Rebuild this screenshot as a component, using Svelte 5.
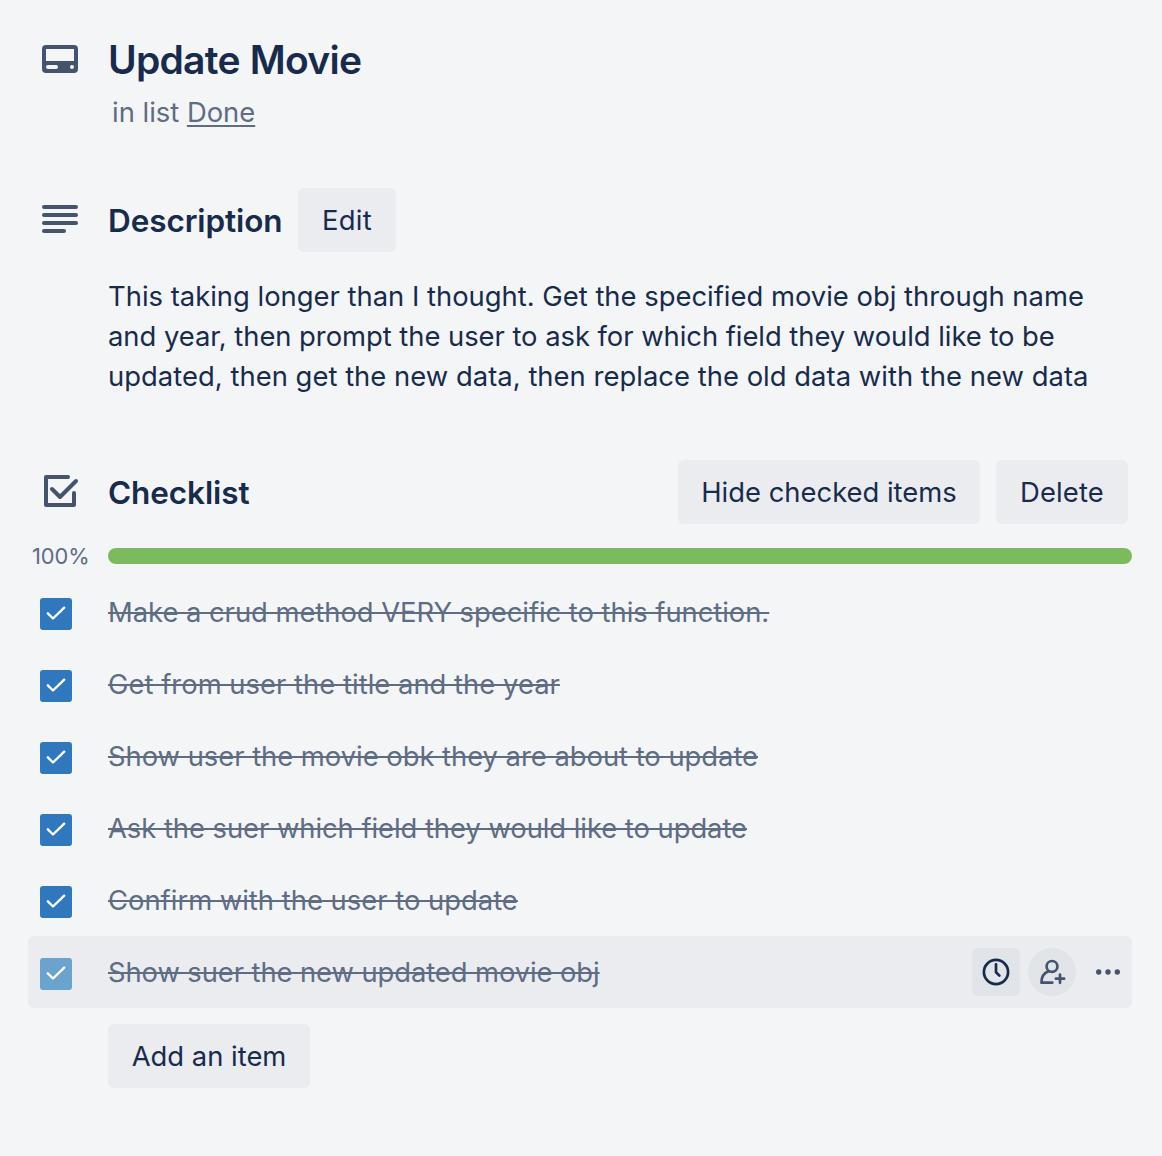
<script>
  const lines = [
    'This taking longer than I thought. Get the specified movie obj through name',
    'and year, then prompt the user to ask for which field they would like to be',
    'updated, then get the new data, then replace the old data with the new data',
  ];
  const items = [
    'Make a crud method VERY specific to this function.',
    'Get from user the title and the year',
    'Show user the movie obk they are about to update',
    'Ask the suer which field they would like to update',
    'Confirm with the user to update',
    'Show suer the new updated movie obj',
  ];
  const active = 5;
</script>

<main>
  <header class="row title-row">
    <svg class="icon" width="48" height="48" viewBox="0 0 48 48">
      <path fill="#44546f" fill-rule="evenodd" d="M10 10h28a4 4 0 0 1 4 4v20a4 4 0 0 1-4 4H10a4 4 0 0 1-4-4V14a4 4 0 0 1 4-4zm0 4v12h28V14zM12 30a2 2 0 0 0 0 4h8a2 2 0 0 0 0-4zM36 30a2 2 0 1 0 0 4a2 2 0 0 0 0-4z" />
    </svg>
    <h1>Update Movie</h1>
  </header>
  <p class="sub">in list <span>Done</span></p>

  <section class="row desc-row">
    <svg class="icon" width="48" height="48" viewBox="0 0 48 48" stroke="#44546f" stroke-width="4" stroke-linecap="round">
      <path d="M8 11h32M8 19h32M8 27h32M8 35h20" />
    </svg>
    <h2>Description</h2>
    <button class="b-edit">Edit</button>
  </section>
  <div class="text">
    {#each lines as line, i}
      <div class="l{i}">{line}</div>
    {/each}
  </div>

  <section class="row check-row">
    <svg class="icon" width="48" height="48" viewBox="0 0 48 48" fill="none" stroke="#44546f" stroke-width="4" stroke-linecap="round" stroke-linejoin="round">
      <path d="M32 9H10V37H38V25M16 21l8 8L40 13" />
    </svg>
    <h2>Checklist</h2>
    <div class="actions">
      <button class="b-hide">Hide checked items</button>
      <button class="b-delete">Delete</button>
    </div>
  </section>
  <div class="progress">
    <span>100%</span>
    <div class="bar"></div>
  </div>

  <ul>
    {#each items as item, i}
      <li class:active={i === active}>
        <span class="box">
          <svg width="32" height="32" viewBox="0 0 32 32" fill="none" stroke="#fff" stroke-width="2.4" stroke-linecap="round" stroke-linejoin="round">
            <path d="M7.8 15.3l5.2 5.2L24.2 9.7" />
          </svg>
        </span>
        <span class="item i{i}">{item}</span>
        {#if i === active}
          <div class="tools">
            <span class="tool clock">
              <svg width="48" height="48" viewBox="0 0 48 48" fill="none" stroke="#172b4d" stroke-width="2.7" stroke-linecap="round" stroke-linejoin="round">
                <circle cx="24" cy="24" r="12.1" />
                <path d="M24 16.3V24.2l3.4 3.4" />
              </svg>
            </span>
            <span class="tool person">
              <svg width="48" height="48" viewBox="0 0 48 48" fill="none" stroke="#44546f" stroke-width="2.7" stroke-linecap="round" stroke-linejoin="round">
                <circle cx="24" cy="18.4" r="5.4" />
                <path d="M24.3 34.7H13.4C13.4 29 15.8 25 20.6 23.3M32 26.6v8.2M27.9 30.7h8.2" />
              </svg>
            </span>
            <span class="tool">
              <svg width="48" height="48" viewBox="0 0 48 48" fill="#44546f">
                <circle cx="14.7" cy="24" r="2.7" />
                <circle cx="24" cy="24" r="2.7" />
                <circle cx="33.3" cy="24" r="2.7" />
              </svg>
            </span>
          </div>
        {/if}
      </li>
    {/each}
  </ul>
  <button class="b-add">Add an item</button>
</main>

<style>
  :global(body) {
    background: #f4f5f7;
  }
  main {
    box-sizing: border-box;
    width: 1162px;
    height: 1156px;
    padding: 35px 30px 0 28px;
    background: #f4f5f7;
    color: #172b4d;
    font: 400 27.4px/40px Inter, 'Liberation Sans', sans-serif;
    white-space: nowrap;
  }
  h1, h2, p, ul { margin: 0; padding: 0; }
  .row { display: flex; align-items: center; }
  .icon { margin: 0 24px 0 8px; flex: none; display: block; }
  .title-row { height: 50px; align-items: flex-start; }
  h1 { font-size: 39px; line-height: 50px; font-weight: 620; letter-spacing: -0.75px; word-spacing: 1px; }
  .sub { margin: 7px 0 0 84px; color: #5e6c84; }
  .sub span { text-decoration: underline; text-underline-offset: 3px; text-decoration-thickness: 2px; }
  h2 { font-size: 31.5px; font-weight: 630; line-height: 40px; padding-top: 2px; letter-spacing: -0.1px; }
  .desc-row { height: 64px; margin-top: 56px; }
  .check-row { height: 64px; margin-top: 64px; }
  button {
    display: block;
    box-sizing: border-box;
    height: 64px;
    padding: 0;
    border: 0;
    border-radius: 6px;
    background: #ebecf0;
    color: #172b4d;
    font: inherit;
    text-align: center;
  }
  .b-edit { width: 98px; margin-left: auto; margin-right: 736px; letter-spacing: 0.3px; }
  .actions { display: flex; gap: 16px; margin: 0 4px 0 auto; }
  .b-hide { width: 302px; }
  .b-delete { width: 132px; letter-spacing: 0.15px; }
  .b-add { width: 202px; margin: 16px 0 0 80px; }
  .text { margin: 24px 0 0 80px; }
  .l1 { letter-spacing: -0.04px; }
  .l2 { letter-spacing: 0.03px; }
  .progress { display: flex; align-items: center; height: 64px; margin-bottom: -12px; }
  .progress span { width: 76px; margin-left: 4px; font-size: 21.8px; color: #5e6c84; }
  .bar { flex: 1; height: 16px; border-radius: 8px; background: #7bbb5e; }
  ul { list-style: none; }
  li { display: flex; align-items: center; height: 72px; border-radius: 6px; color: #5e6c84; }
  .active { background: #ebecf0; }
  .box { width: 32px; height: 32px; margin: 4px 36px 0 12px; border-radius: 3px; background: #2f78bd; }
  .box svg { display: block; }
  .active .box { background: #6aa3cc; }
  .item { text-decoration: line-through; text-decoration-thickness: 2px; }
  .i0 { letter-spacing: -0.04px; }
  .i1 { letter-spacing: 0.02px; }
  .i2 { letter-spacing: -0.03px; }
  .i3 { letter-spacing: -0.05px; }
  .i5 { letter-spacing: -0.09px; }
  .tools { display: flex; gap: 8px; margin-left: auto; }
  .tool { width: 48px; height: 48px; }
  .tool svg { display: block; }
  .clock { border-radius: 6px; background: #e1e4e8; }
  .person { border-radius: 50%; background: #e1e4e8; }
</style>
